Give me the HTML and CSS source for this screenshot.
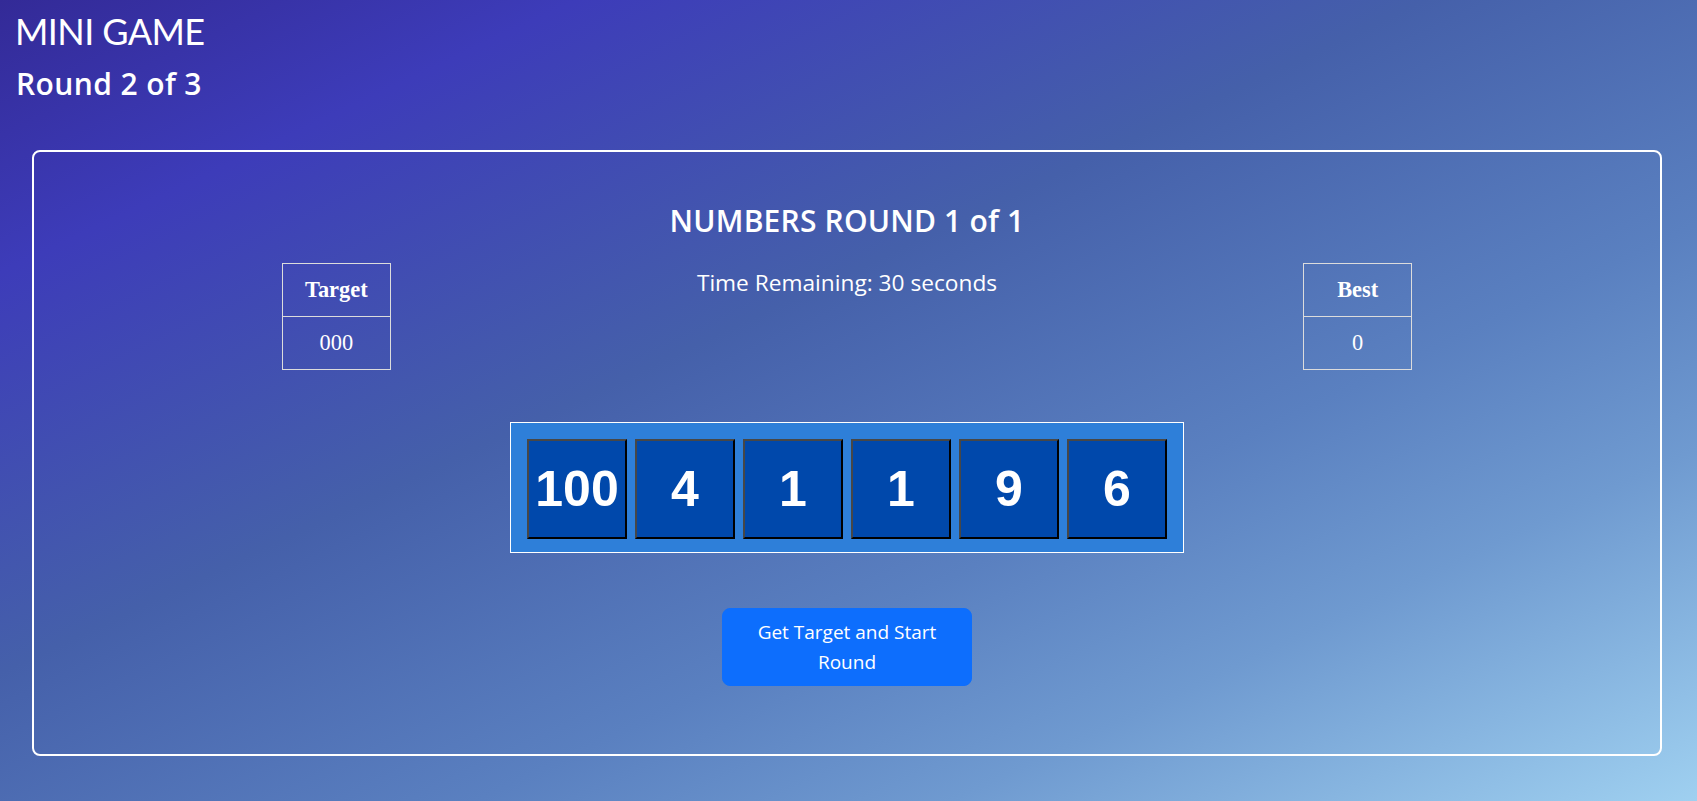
FILE: index.html
```html
<!DOCTYPE html>
<html lang="en">
<head>
<meta charset="utf-8">
<title>Mini Game</title>
<link rel="stylesheet" href="styles.css">
</head>
<body>
<div class="page">
  <header class="page-head">
    <h1 class="title">MINI GAME</h1>
    <h2 class="subtitle">Round 2 of 3</h2>
  </header>
  <main class="card">
    <h3 class="round-title">NUMBERS ROUND 1 of 1</h3>
    <div class="stats">
      <div class="stat-col">
        <table class="score">
          <tr><th>Target</th></tr>
          <tr><td>000</td></tr>
        </table>
      </div>
      <div class="stat-col">
        <p class="timer">Time Remaining: 30 seconds</p>
      </div>
      <div class="stat-col">
        <table class="score">
          <tr><th>Best</th></tr>
          <tr><td>0</td></tr>
        </table>
      </div>
    </div>
    <div class="tiles-row">
      <div class="tiles">
        <div class="tile">100</div>
        <div class="tile">4</div>
        <div class="tile">1</div>
        <div class="tile">1</div>
        <div class="tile">9</div>
        <div class="tile">6</div>
      </div>
    </div>
    <div class="actions">
      <button class="btn" type="button">Get Target and Start Round</button>
    </div>
  </main>
</div>
</body>
</html>
```
FILE: styles.css
```css
* { box-sizing: border-box; }
html, body { margin: 0; height: 100%; }
body {
  background: linear-gradient(to bottom right, #332a97 0%, #3d3cb9 17%, #4560aa 42%, #5a80c0 64%, #6f9ad0 78%, #9fd0f0 100%);
  color: #fff;
  font-family: "Open Sans", "Noto Sans", sans-serif;
  min-height: 801px;
}
.page { padding: 10px 0 0 0; }
.page-head { padding-left: 15px; }
.title {
  margin: 0;
  font-family: Lato, "Open Sans", sans-serif;
  font-weight: 400;
  font-size: 36px;
  line-height: 1.2;
  letter-spacing: -0.6px;
}
.subtitle {
  margin: 13px 0 0 1px;
  font-weight: 600;
  font-size: 30px;
  line-height: 1.2;
  letter-spacing: 0.4px;
}
.card {
  margin: 48px 35px 0 32px;
  border: 2px solid #fff;
  border-radius: 8px;
  padding: 51px 47px 68px;
}
.round-title {
  margin: 0;
  text-align: center;
  font-weight: 600;
  font-size: 30px;
  line-height: 36px;
  letter-spacing: 0.2px;
}
.stats {
  margin-top: 24px;
  display: grid;
  grid-template-columns: 1fr 1fr 1fr;
  align-items: start;
  height: 107px;
}
.stat-col { display: flex; justify-content: center; }
.score {
  border-collapse: collapse;
  width: 109px;
  font-family: "Liberation Serif", serif;
  font-size: 22.4px;
  color: #fff;
}
.score th, .score td {
  border: 1px solid #dcdcdc;
  height: 53px;
  text-align: center;
  padding: 0;
}
.score th { font-weight: 700; }
.score td { font-weight: 400; }
.timer {
  margin: 2px 0 0;
  font-size: 22.7px;
  line-height: 36px;
  text-align: center;
}
.tiles-row {
  margin-top: 52px;
  display: flex;
  justify-content: center;
}
.tiles {
  display: flex;
  gap: 8px;
  padding: 16px 16px 13px;
  border: 1px solid #fff;
  background: #2e7fd9;
}
.tile {
  width: 100px;
  height: 100px;
  display: flex;
  align-items: center;
  justify-content: center;
  background: #0048ab;
  border: 2px solid;
  border-color: #474747 #000 #000 #474747;
  font-family: "Liberation Sans", Arial, sans-serif;
  font-weight: 700;
  font-size: 50px;
  color: #fff;
}
.actions {
  margin-top: 55px;
  display: flex;
  justify-content: center;
}
.btn {
  width: 250px;
  padding: 8px 16px;
  border: 1px solid #0d6efd;
  border-radius: 8px;
  background: #0d6efd;
  color: #fff;
  font-family: "Open Sans", "Noto Sans", sans-serif;
  font-size: 19px;
  line-height: 30px;
  cursor: pointer;
}
```
